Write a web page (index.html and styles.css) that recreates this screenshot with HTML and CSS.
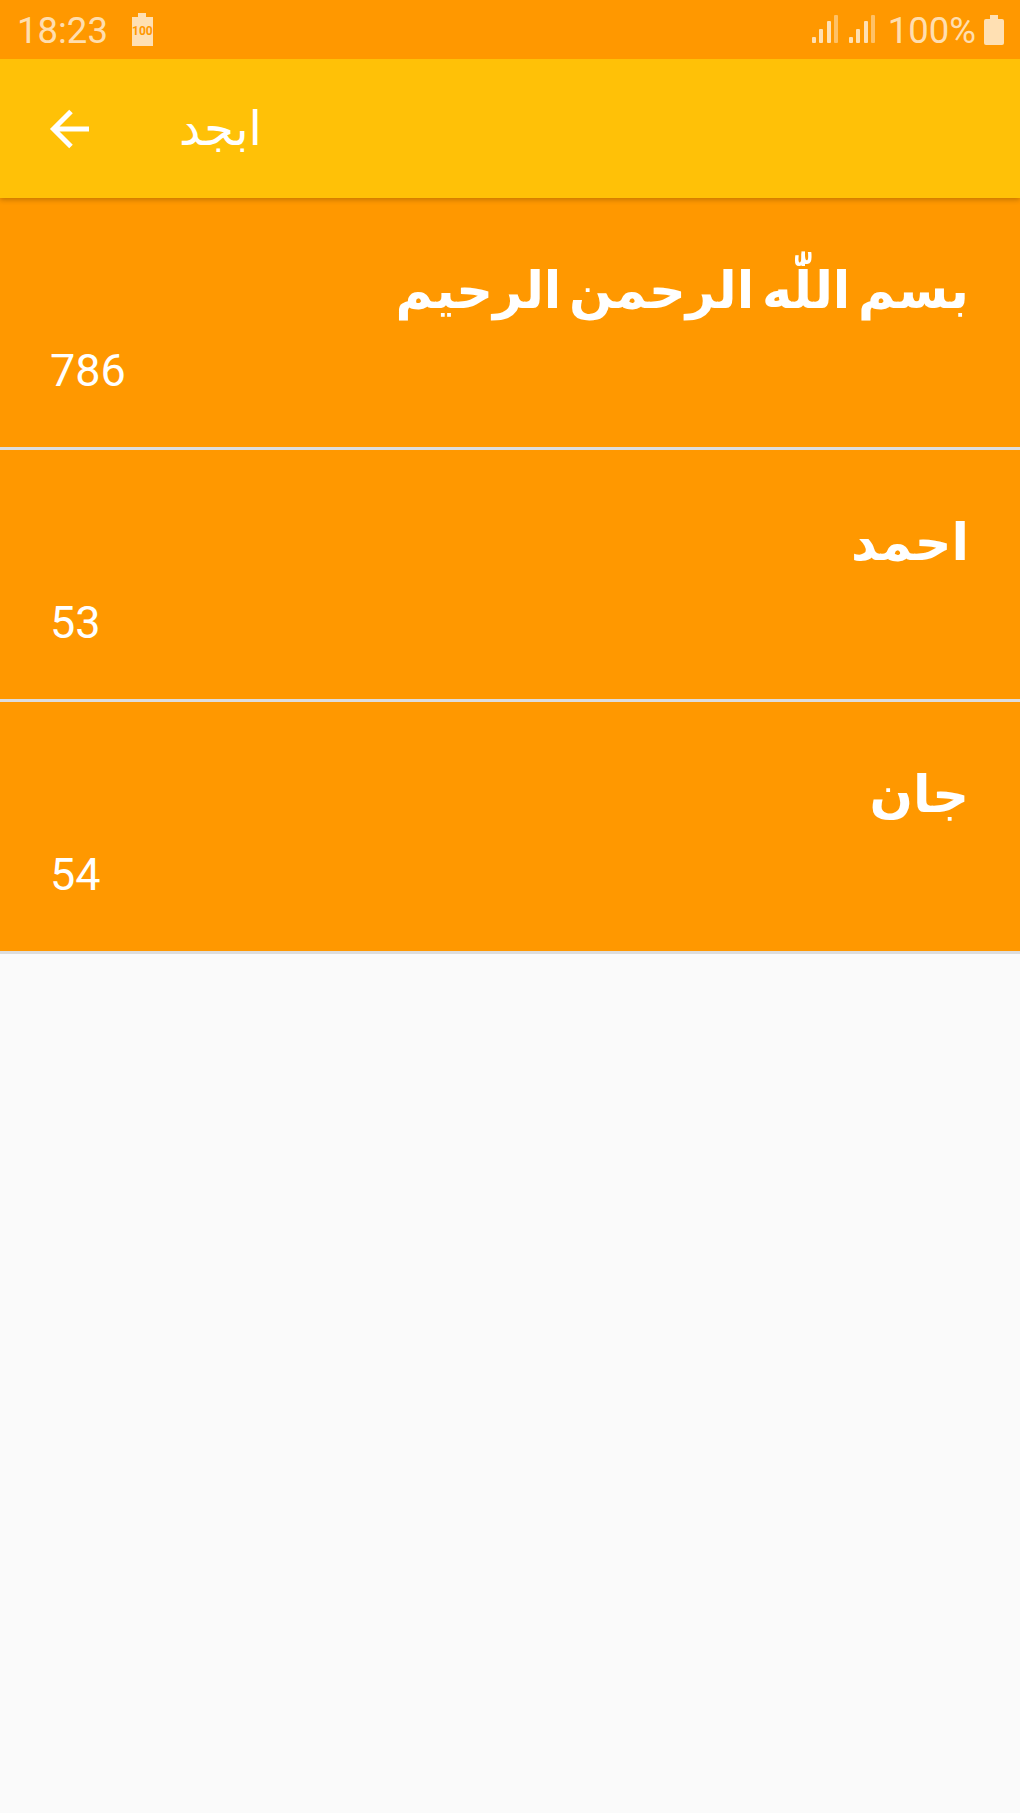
FILE: index.html
```html
<!DOCTYPE html>
<html lang="ar"><head>
  <meta charset="utf-8">
  <title>ابجد</title>
  <link rel="stylesheet" href="styles.css">
</head>
<body>

<div class="statusbar">
  <div class="status-left">
    <span>18:23</span>
    <div class="batt-saver"><span>100</span></div>
  </div>
  <div class="status-right">
    <svg class="signal" width="27" height="28" viewBox="0 0 27 28"><rect x="0" y="22" width="4" height="6" rx="1"/><rect x="7" y="14" width="4" height="14" rx="1"/><rect x="15" y="6" width="4" height="22" rx="1"/><rect class="dim" x="22" y="0" width="4" height="28" rx="1"/></svg>
    <svg class="signal" width="27" height="28" viewBox="0 0 27 28"><rect x="0" y="22" width="4" height="6" rx="1"/><rect x="7" y="14" width="4" height="14" rx="1"/><rect x="15" y="6" width="4" height="22" rx="1"/><rect class="dim" x="22" y="0" width="4" height="28" rx="1"/></svg>
    <span class="percent">100%</span>
    <div class="batt"></div>
  </div>
</div>

<div class="toolbar">
  <svg class="back" width="40" height="40" viewBox="0 0 40 40"><path d="M40 20H4M22 2.500L4.500 20L22 37.500" fill="none" stroke="#fff" stroke-width="5"/></svg>
  <div class="toolbar-title" dir="rtl">ابجد</div>
</div>

<div class="list">
  <div class="row">
    <div class="name" dir="rtl">بسم اللّٰه الرحمن الرحيم</div>
    <div class="num">786</div>
  </div>
  <div class="row">
    <div class="name" dir="rtl">احمد</div>
    <div class="num">53</div>
  </div>
  <div class="row">
    <div class="name" dir="rtl">جان</div>
    <div class="num">54</div>
  </div>
</div>

</body></html>
```

FILE: styles.css
```css
body,html { background:#fafafa; font-family:Roboto, "DejaVu Sans", sans-serif; padding:0; margin:0; }

.statusbar {
  position: relative;
  z-index: 1;
  display: flex;
  justify-content: space-between;
  align-items: center;
  height: 59px;
  padding: 2px 16px 0 17px;
  box-sizing: border-box;
  background: #ff9800;
  color: rgba(255,255,255,.7);
  font-size: 36.500px;
}
.status-left, .status-right {
  display: flex;
  align-items: center;
}
.batt-saver {
  position: relative;
  width: 21px;
  height: 29px;
  margin-left: 24px;
  margin-top: 1px;
  background: rgba(255,255,255,.7);
  color: #ff9800;
  font-size: 12px;
  font-weight: 700;
  line-height: 29px;
  text-align: center;
}
.batt-saver:before, .batt:before {
  content: "";
  position: absolute;
  top: -4px;
  left: 6px;
  width: 8px;
  height: 4px;
  background: rgba(255,255,255,.7);
}
.signal { fill: rgba(255,255,255,.7); margin: 0 10px 3px 0; }
.signal .dim { fill: rgba(255,255,255,.4); }
.percent { margin: 0 8px 0 2px; }
.batt {
  position: relative;
  width: 20px;
  height: 26px;
  margin-top: 2px;
  border-radius: 2px;
  background: rgba(255,255,255,.7);
}

.toolbar {
  position: relative;
  display: flex;
  align-items: center;
  height: 139px;
  padding-left: 49px;
  background: #ffc107;
  box-shadow: 0 2px 5px rgba(0,0,0,.22);
}
.toolbar-title {
  margin-left: 90px;
  color: #fff;
  font-size: 48px;
}

.row {
  height: 249px;
  padding: 0 50px;
  background: #ff9800;
  border-bottom: 3px solid #ddd;
  color: #fff;
}
.name {
  padding-top: 53px;
  padding-right: 1px;
  font-size: 51px;
  font-weight: 700;
  line-height: 80px;
  word-spacing: -5px;
}
.num {
  margin-top: 14px;
  font-size: 45px;
  line-height: 52px;
}
```
